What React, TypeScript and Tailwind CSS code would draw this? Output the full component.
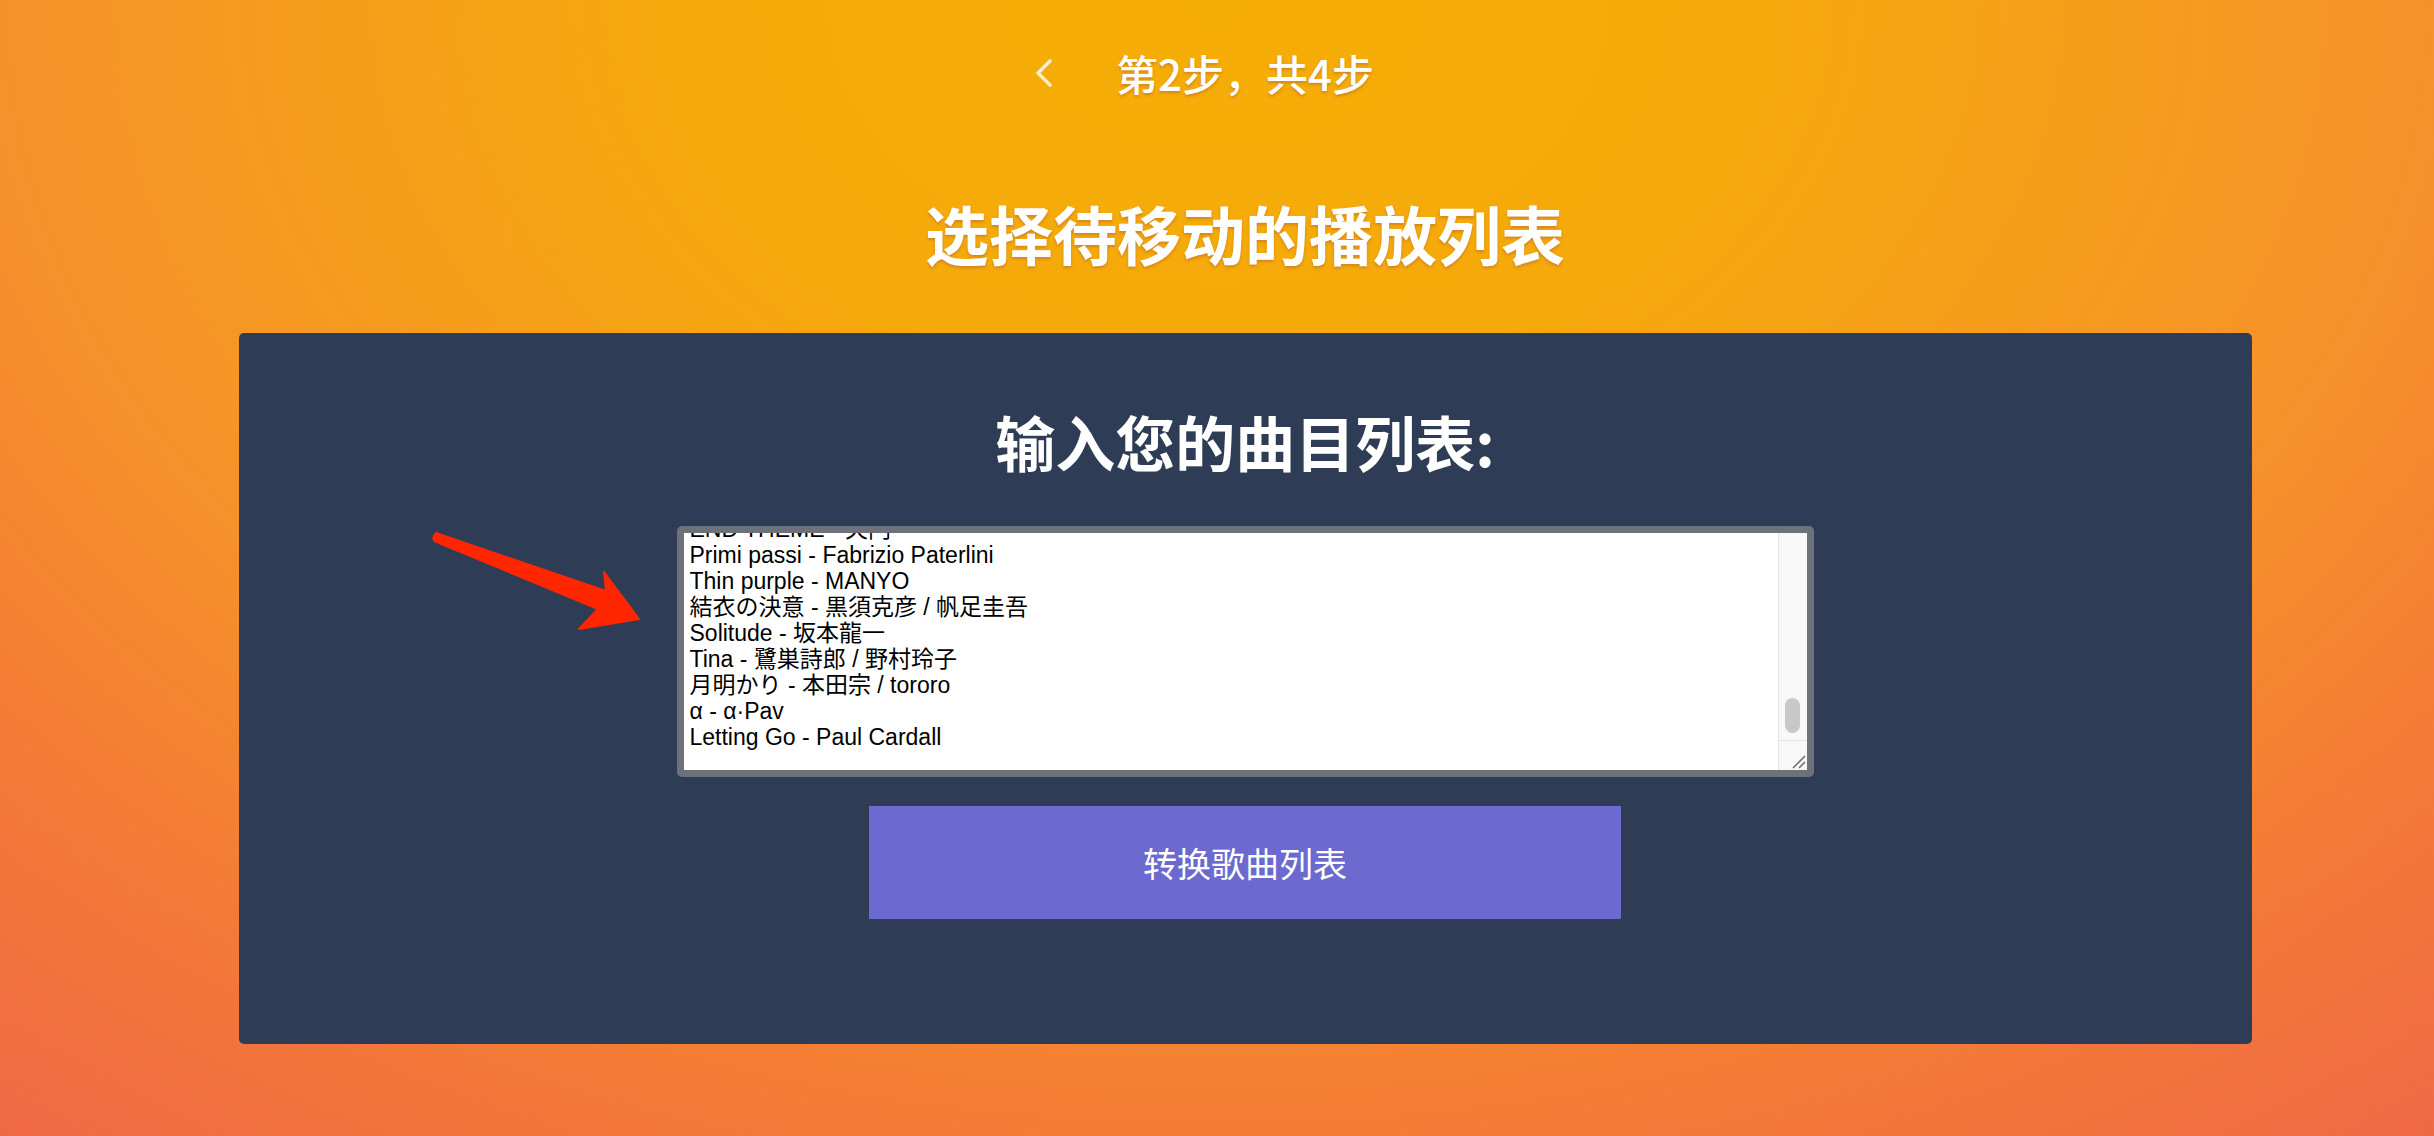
const LINES = [
  "END THEME - 天門",
  "Primi passi - Fabrizio Paterlini",
  "Thin purple - MANYO",
  "結衣の決意 - 黒須克彦 / 帆足圭吾",
  "Solitude - 坂本龍一",
  "Tina - 鷺巣詩郎 / 野村玲子",
  "月明かり - 本田宗 / tororo",
  "α - α·Pav",
  "Letting Go - Paul Cardall",
];

function Chevron() {
  return (
    <svg width="20" height="30" viewBox="0 0 20 30" className="opacity-80">
      <polyline points="16,3 4,15 16,27" fill="none" stroke="#fff" strokeWidth="3.5" strokeLinecap="round" strokeLinejoin="round" />
    </svg>
  );
}

function Arrow() {
  // annotation arrow drawn on top of the panel
  return (
    <svg width="220" height="110" viewBox="0 0 220 110" className="absolute left-[187px] top-[192px]">
      <path
        d="M10 8 L180 66 L178 47 L213 94 L153 104 L172 84 L13 18 Z"
        fill="#ff2600"
        stroke="#ff2600"
        strokeWidth="2"
        strokeLinejoin="round"
      />
      <circle cx="11.5" cy="13" r="5.2" fill="#ff2600" />
    </svg>
  );
}

function TrackList() {
  return (
    <div className="mt-[55px] w-[1137px] h-[251px] border-[7px] border-[#6c717c] rounded-[5px] bg-white flex overflow-hidden">
      <div className="flex-1 overflow-hidden pl-[6px]">
        <div className="-mt-[17px] text-[23px] leading-[26px] text-black font-['Liberation_Sans','Noto_Sans_CJK_JP',sans-serif]">
          {LINES.map((l) => (
            <div key={l} className="whitespace-nowrap">{l}</div>
          ))}
        </div>
      </div>
      {/* fake overlay scrollbar, scrolled to bottom */}
      <div className="w-[29px] flex flex-col bg-[#f8f8f8] border-l border-[#e4e4e4]">
        <div className="flex-1 flex flex-col justify-end items-center pb-[7px]">
          <div className="w-[15px] h-[35px] rounded-full bg-[#c8c8c8]" />
        </div>
        <div className="h-[30px] border-t border-[#e4e4e4] relative">
          <svg width="28" height="29" viewBox="0 0 28 29" className="absolute inset-0">
            <line x1="14" y1="27" x2="26" y2="15" stroke="#6f6f6f" strokeWidth="1.6" />
            <line x1="20" y1="27" x2="26" y2="21" stroke="#6f6f6f" strokeWidth="1.6" />
          </svg>
        </div>
      </div>
    </div>
  );
}

export default function App() {
  return (
    <div className="min-h-[1136px] w-full pl-[56px] bg-[radial-gradient(ellipse_1800px_1300px_at_50%_0%,#f5ae05_0%,#f5a90b_30%,#f6922a_67%,#f37c35_87%,#f06945_110%)] font-['Noto_Sans_CJK_SC',sans-serif]">
      <div className="flex flex-col items-center">
        {/* Step header */}
        <div className="pt-[49px] h-[97px] flex items-center gap-[62px] text-white text-[42px] leading-[48px] font-medium [text-shadow:0_2px_3px_rgba(150,60,70,0.35)]">
          <Chevron />
          <span>第2步，共4步</span>
          <span className="w-[20px]" />
        </div>

        <h1 className="mt-[103px] text-white text-[64px] leading-none font-bold [text-shadow:0_2px_3px_rgba(150,60,70,0.35)]">
          选择待移动的播放列表
        </h1>

        <div className="relative mt-[69px] w-[2013px] rounded-[5px] bg-[#2e3c56] flex flex-col items-center pt-[78px] pb-[125px]">
          <Arrow />
          <h2 className="text-white text-[60px] leading-none font-bold">输入您的曲目列表:</h2>
          <TrackList />
          <button className="mt-[29px] w-[752px] h-[113px] bg-[#6c69cf] text-white text-[34px] leading-none">
            转换歌曲列表
          </button>
        </div>
      </div>
    </div>
  );
}
